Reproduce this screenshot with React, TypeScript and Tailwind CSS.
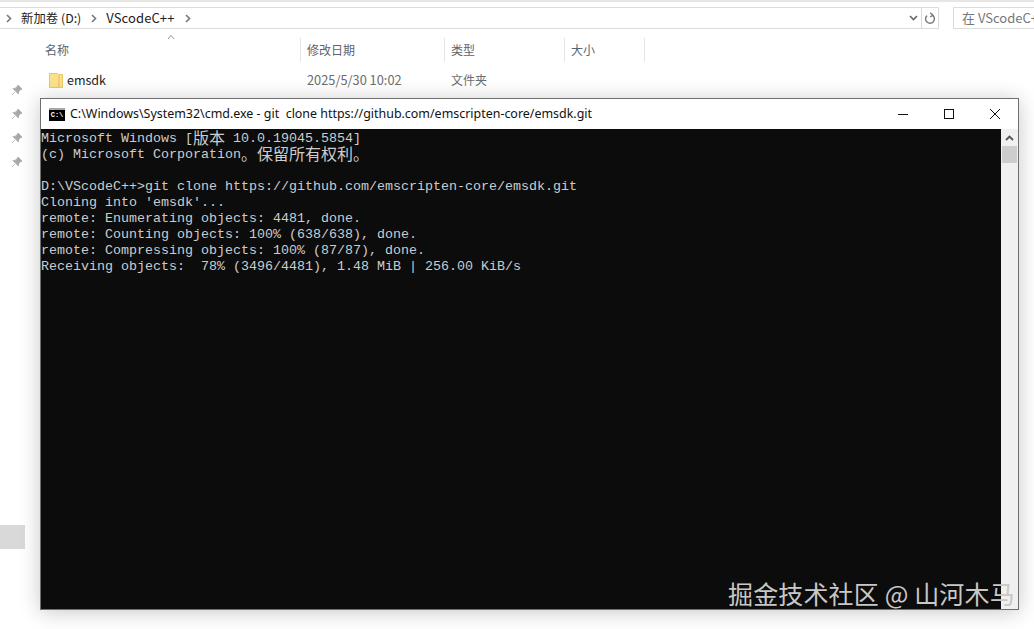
import React from "react";

const ui = { fontFamily: '"Noto Sans CJK SC", "Noto Sans", sans-serif' };

function Chevron({ className = "" }: { className?: string }) {
  return (
    <svg width="6" height="9" viewBox="0 0 6 9" className={className}>
      <path d="M1 1l3.5 3.5L1 8" fill="none" stroke="#777" strokeWidth="1.6" />
    </svg>
  );
}

function Pin() {
  return (
    <svg width="12" height="12" viewBox="0 0 12 12">
      <path d="M7 1l4 4-1.2.6-2 2L7.4 10 2 4.6l2.4-.4 2-2z M3.8 8.2L1 11" fill="#a9a9a9" stroke="#a9a9a9" strokeWidth="0.8" />
    </svg>
  );
}

function Header({ label, w }: { label: string; w: string }) {
  return (
    <div className={`${w} h-[24px] flex items-center border-r border-[#e5e5e5] text-[12px] text-[#5c6470] pl-[6px]`}>{label}</div>
  );
}

function Line({ children }: { children?: React.ReactNode }) {
  return <div className="h-[16px] leading-[16px] whitespace-pre flex items-center">{children}</div>;
}

function Cjk({ children }: { children: React.ReactNode }) {
  return (
    <span className="text-[16px] leading-[16px] mb-[5px]" style={ui}>
      {children}
    </span>
  );
}

export default function App() {
  return (
    <div className="relative w-[1034px] h-[629px] overflow-hidden bg-white" style={ui}>
      <div className="h-[2px] bg-[#e6e6e6]" />
      <div className="h-[5px]" />
      <div className="h-[22px] flex items-stretch border-y border-[#dcdcdc]">
        <div className="w-[922px] flex items-center border-r border-[#d9d9d9] text-[12.4px] text-[#222]">
          <Chevron className="ml-[6px]" />
          <span className="ml-[9px]">新加卷 (D:)</span>
          <Chevron className="ml-[10px]" />
          <span className="ml-[9px] text-[13px] tracking-[0.1px]">VScodeC++</span>
          <Chevron className="ml-[11px]" />
          <svg width="9" height="6" viewBox="0 0 9 6" className="ml-auto mr-[3px]">
            <path d="M1 1l3.5 3.5L8 1" fill="none" stroke="#666" strokeWidth="1.6" />
          </svg>
        </div>
        <div className="w-[17px] flex items-center justify-center border-r border-[#d9d9d9]">
          <svg width="12" height="13" viewBox="0 0 12 13">
            <path d="M3 3.6a4.4 4.4 0 1 0 5.6-.3M6.2 0.8L8.9 3.1 6.2 5" fill="none" stroke="#7d7d7d" strokeWidth="1.5" />
          </svg>
        </div>
        <div className="w-[14px] bg-white -my-px" />
        <div className="flex-1 flex items-center border-l border-[#d9d9d9] pl-[8px] text-[13px] text-[#777] whitespace-nowrap overflow-hidden">
          在 VScodeC++
        </div>
      </div>

      <div className="flex">
        <div className="w-[30px] h-[600px] flex flex-col relative">
          <div className="mt-[55px] flex flex-col gap-[12px] pl-[11px]">
            <Pin />
            <Pin />
            <Pin />
            <Pin />
          </div>
          <div className="mt-[357px] w-[25px] h-[24px] bg-[#d9d9d9]" />
        </div>
        <div className="flex-1 flex flex-col">
          <div className="relative flex items-center mt-[9px] ml-[9px]">
            <div className="w-[262px] h-[24px] flex items-center border-r border-[#e5e5e5] text-[12px] text-[#5c6470] pl-[6px]">名称</div>
            <Header label="修改日期" w="w-[144px]" />
            <Header label="类型" w="w-[120px]" />
            <Header label="大小" w="w-[80px]" />
            <svg width="8" height="6" viewBox="0 0 8 6" className="absolute left-[128px] -top-[4px]">
              <path d="M1 5l3-3.5L7 5" fill="none" stroke="#999" strokeWidth="1" />
            </svg>
          </div>
          <div className="flex items-center mt-[8px] h-[20px] text-[12px] ml-[19px]">
            <svg width="14" height="16" viewBox="0 0 14 16" className="shrink-0">
              <path d="M0.5 1.5h8l1 1h4v13h-13z" fill="#fbe08e" stroke="#e8c766" />
              <path d="M10 2.5v13" stroke="#f2cf70" strokeWidth="2" />
            </svg>
            <span className="ml-[4px] text-[12.5px] text-[#222] w-[240px]">emsdk</span>
            <span className="text-[12.8px] text-[#6d6d6d] w-[144px]">2025/5/30 10:02</span>
            <span className="text-[#6d6d6d]">文件夹</span>
          </div>
        </div>
      </div>

      {/* cmd window */}
      <div className="absolute left-[40px] top-[98px] w-[979px] h-[512px] flex flex-col border border-[#6f6f6f] bg-white shadow-[0_2px_20px_rgba(0,0,0,0.22)]">
        <div className="h-[30px] shrink-0 flex items-center bg-white">
          <div className="ml-[8px] w-[16px] h-[13px] bg-black border-t-[2px] border-[#a8a8a8] flex items-center justify-center">
            <span className="text-[7px] leading-[7px] font-bold text-white" style={{ fontFamily: '"Liberation Mono", monospace' }}>C:\</span>
          </div>
          <span className="ml-[5px] text-[12.45px] text-[#111] whitespace-pre" style={{ fontFamily: '"Noto Sans", sans-serif' }}>
            C:\Windows\System32\cmd.exe - git  clone https://github.com/emscripten-core/emsdk.git
          </span>
          <div className="ml-auto flex items-center text-black">
            <svg width="46" height="12" viewBox="0 0 46 12"><path d="M18 6.5h10" stroke="#111" strokeWidth="1" /></svg>
            <svg width="46" height="12" viewBox="0 0 46 12"><rect x="18.5" y="1.5" width="9" height="9" fill="none" stroke="#111" /></svg>
            <svg width="46" height="12" viewBox="0 0 46 12"><path d="M18 1l10 10M28 1L18 11" stroke="#111" fill="none" /></svg>
          </div>
        </div>
        <div className="flex-1 flex min-h-0">
          <div
            className="flex-1 bg-[#0c0c0c] text-[#cccccc] text-[13.33px] pt-[2px] overflow-hidden"
            style={{ fontFamily: '"Liberation Mono", monospace' }}
          >
            <Line>Microsoft Windows [<Cjk>版本</Cjk> 10.0.19045.5854]</Line>
            <Line>(c) Microsoft Corporation<Cjk>。保留所有权利。</Cjk></Line>
            <Line />
            <Line>D:\VScodeC++&gt;git clone https://github.com/emscripten-core/emsdk.git</Line>
            <Line>Cloning into 'emsdk'...</Line>
            <Line>remote: Enumerating objects: 4481, done.</Line>
            <Line>remote: Counting objects: 100% (638/638), done.</Line>
            <Line>remote: Compressing objects: 100% (87/87), done.</Line>
            <Line>Receiving objects:  78% (3496/4481), 1.48 MiB | 256.00 KiB/s</Line>
          </div>
          <div className="w-[17px] shrink-0 bg-[#f0f0f0] flex flex-col items-center">
            <div className="h-[17px] flex items-center justify-center">
              <svg width="9" height="6" viewBox="0 0 9 6"><path d="M1 5l3.5-3.5L8 5" fill="none" stroke="#555" strokeWidth="1.8" /></svg>
            </div>
            <div className="w-[15px] h-[17px] bg-[#cdcdcd]" />
          </div>
        </div>
      </div>

      <div className="absolute left-[728px] top-[576px] text-[25px] leading-[34px] tracking-[0.15px] text-[#c8c8c8] whitespace-nowrap">
        掘金技术社区 @ 山河木马
      </div>
    </div>
  );
}
